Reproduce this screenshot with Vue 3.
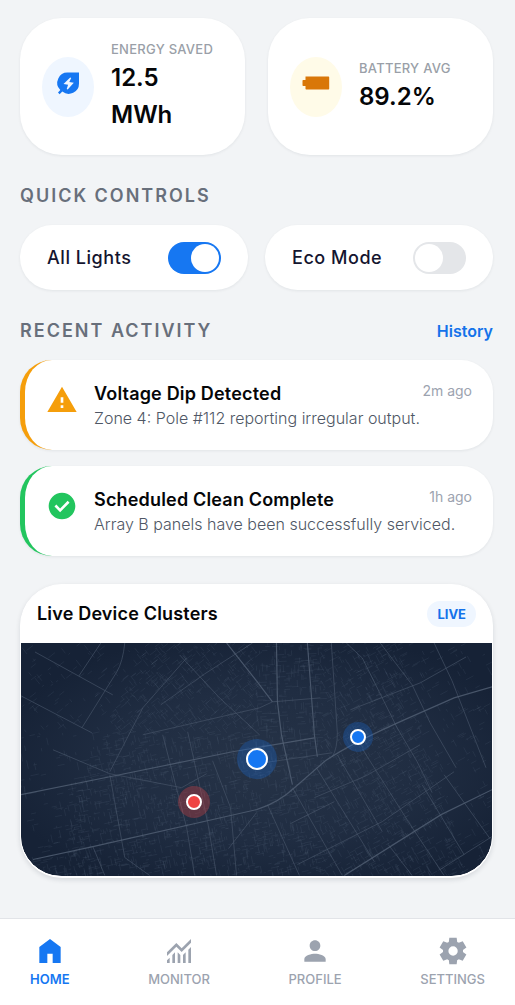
<template>
  <div class="dashboard">
    <main class="content">
      <section class="stat-grid">
        <article v-for="stat in stats" :key="stat.label" class="card stat-card">
          <span class="stat-icon" :class="stat.tone">
            <svg viewBox="0 0 28 28" aria-hidden="true">
              <path fill-rule="evenodd" :d="stat.icon" />
            </svg>
          </span>
          <div>
            <p class="stat-label">{{ stat.label }}</p>
            <p class="stat-value">{{ stat.value }}</p>
          </div>
        </article>
      </section>

      <section class="section">
        <div class="section-header">
          <h2>QUICK CONTROLS</h2>
        </div>
        <div class="control-grid">
          <label v-for="control in controls" :key="control.label" class="card control">
            <span>{{ control.label }}</span>
            <input v-model="control.on" type="checkbox" role="switch" class="switch" />
          </label>
        </div>
      </section>

      <section class="section">
        <div class="section-header">
          <h2>RECENT ACTIVITY</h2>
          <a href="#history">History</a>
        </div>
        <div class="activity-list">
          <article
            v-for="item in activities"
            :key="item.title"
            class="card activity"
            :class="item.tone"
          >
            <svg class="activity-icon" viewBox="0 0 24 24" aria-hidden="true">
              <path :d="item.icon" />
            </svg>
            <div class="activity-body">
              <div class="activity-top">
                <h3>{{ item.title }}</h3>
                <time>{{ item.time }}</time>
              </div>
              <p>{{ item.text }}</p>
            </div>
          </article>
        </div>
      </section>

      <section class="section map-card">
        <div class="map-header">
          <h3>Live Device Clusters</h3>
          <span class="badge">LIVE</span>
        </div>
        <div class="map">
          <svg viewBox="0 0 472 233" preserveAspectRatio="xMidYMid slice" aria-hidden="true">
            <defs>
              <radialGradient id="land" cx="52%" cy="52%" r="58%">
                <stop offset="0" stop-color="#263347" />
                <stop offset="0.55" stop-color="#202d42" />
                <stop offset="1" stop-color="#162236" />
              </radialGradient>
            </defs>
            <rect width="472" height="233" fill="url(#land)" />
            <path class="lanes" :d="lanes" />
            <path v-for="road in streets" :key="road" class="street" :d="road" />
            <path v-for="road in avenues" :key="road" class="avenue" :d="road" />
          </svg>
          <span
            v-for="pin in pins"
            :key="pin.id"
            class="pin"
            :class="pin.kind"
            :style="{ left: pin.x + '%', top: pin.y + '%' }"
          ></span>
        </div>
      </section>
    </main>

    <nav class="tab-bar">
      <a
        v-for="tab in tabs"
        :key="tab.label"
        :href="tab.href"
        class="tab"
        :class="{ active: tab.active }"
      >
        <svg viewBox="0 0 24 24" aria-hidden="true">
          <path :d="tab.icon" />
        </svg>
        <span>{{ tab.label }}</span>
      </a>
    </nav>
  </div>
</template>

<script setup>
import { ref } from 'vue'

const stats = [
  {
    label: 'ENERGY SAVED',
    value: '12.5 MWh',
    tone: 'blue',
    icon: 'M14.5 3.5H25V14.5A10.3 10.3 0 0 1 8.3 22.6L5.6 25.2L4 23.6L6.3 21A10.3 10.3 0 0 1 14.5 3.5ZM16.2 8.6L9.5 15.1L14.1 15.8L12.7 20.1L13.7 20.4L19.8 13.7L15.3 12.9L17.2 9.1Z'
  },
  {
    label: 'BATTERY AVG',
    value: '89.2%',
    tone: 'amber',
    icon: 'M3.5 7.5H26.5Q27.2 7.5 27.2 8.2V19.8Q27.2 20.5 26.5 20.5H4.2Q3.5 20.5 3.5 19.8V17H1.2Q.5 17 .5 16.3V11.7Q.5 11 1.2 11H3.5Z'
  }
]

const controls = ref([
  { label: 'All Lights', on: true },
  { label: 'Eco Mode', on: false }
])

const activities = [
  {
    title: 'Voltage Dip Detected',
    text: 'Zone 4: Pole #112 reporting irregular output.',
    time: '2m ago',
    tone: 'warning',
    icon: 'M1 21h22L12 2 1 21zm12-3h-2v-2h2v2zm0-4h-2v-4h2v4z'
  },
  {
    title: 'Scheduled Clean Complete',
    text: 'Array B panels have been successfully serviced.',
    time: '1h ago',
    tone: 'success',
    icon: 'M12 2C6.48 2 2 6.48 2 12s4.48 10 10 10 10-4.48 10-10S17.52 2 12 2zm-1.4 14.6-4.25-4.25 1.4-1.4 2.85 2.85 5.65-5.65 1.4 1.4z'
  }
]

const avenues = [
  'M0 152L89 134L212 109L294 95',
  'M12 217L72 204L236 167Q258 160 274 145L305 118Q330 101 384 77L434 55L472 44',
  'M206 0L236 38L252 59',
  'M287 0L294 92L297 114',
  'M256 0L257 59L261 92L272 142',
  'M324 233L421 172L472 147'
]

const streets = [
  'M14 9L92 52',
  'M104 0Q102 19 96 29L61 85',
  'M0 53L71 90',
  'M32 107L89 131L161 145L186 131',
  'M80 0L58 33',
  'M166 15L122 65L89 129',
  'M159 12L199 55L239 92',
  'M122 92L239 65L252 59L300 55',
  'M89 132L104 215L129 233M72 204L84 233',
  'M142 92L166 185L174 233',
  'M167 89L187 179L196 233',
  'M192 118L210 165L216 233',
  'M236 170L208 206',
  'M230 122L312 110',
  'M311 0L317 90Q317 106 312 114',
  'M272 145L314 219L322 233',
  'M296 125L354 219',
  'M317 112L362 189',
  'M342 106L390 182L424 233',
  'M326 0L342 15L377 85L397 119L412 150',
  'M360 0L392 42L410 80L436 125',
  'M414 0L432 38L452 89L466 125',
  'M277 222L362 179L434 129',
  'M294 155L346 133L400 102',
  'M270 181L314 159',
  'M402 142L444 212',
  'M424 132L470 196',
  'M330 67L400 40L446 14',
  'M368 202L392 233M420 227L472 194',
  'M247 162L274 222L279 233',
  'M232 0L184 31L140 62'
]

// Fine street texture: short segments aligned to the district's own grid.
function buildLanes() {
  let seed = 17
  const random = () => {
    seed = (seed * 16807) % 2147483647
    return seed / 2147483647
  }
  let d = ''
  for (let i = 0; i < 4800; i++) {
    const x = random() * 472
    const y = random() * 233
    const inCity = x + y * 0.5 > 125 && x - y * 0.3 < 375
    if (!inCity && random() < 0.78) continue
    const base = x > 300 ? -28 : x > 235 && y < 110 ? -3 : x < 235 && y < 90 ? -38 : -12
    const angle = ((base + (random() < 0.5 ? 90 : 0)) * Math.PI) / 180
    const length = 2 + random() * 7
    d += `M${x.toFixed(1)} ${y.toFixed(1)}l${(Math.cos(angle) * length).toFixed(1)} ${(Math.sin(angle) * length).toFixed(1)}`
  }
  return d
}

const lanes = buildLanes()

const pins = [
  { id: 1, kind: 'large', x: 50, y: 50 },
  { id: 2, kind: 'alert', x: 36.7, y: 68.3 },
  { id: 3, kind: 'small', x: 71.6, y: 40.4 }
]

const tabs = [
  {
    label: 'HOME',
    href: '#home',
    active: true,
    icon: 'M4 21V9l8-6 8 6v12h-6v-7h-4v7z'
  },
  {
    label: 'MONITOR',
    href: '#monitor',
    icon: 'M3 21v-2l2-2v4zm4 0v-6l2-2v8zm4 0v-8l2 2.025V21zm4 0v-5.975l2-2V21zm4 0V11l2-2v12zM3 15.825V13l7-7 4 4 7-7v2.825l-7 7-4-4z'
  },
  {
    label: 'PROFILE',
    href: '#profile',
    icon: 'M12 12c2.21 0 4-1.79 4-4s-1.79-4-4-4-4 1.79-4 4 1.79 4 4 4zm0 2c-2.67 0-8 1.34-8 4v2h16v-2c0-2.66-5.33-4-8-4z'
  },
  {
    label: 'SETTINGS',
    href: '#settings',
    icon: 'M9.25 22l-.4-3.2q-.325-.125-.612-.3t-.563-.375L4.7 19.375l-2.75-4.75 2.575-1.95Q4.5 12.5 4.5 12.338v-.675q0-.163.025-.338L1.95 9.375l2.75-4.75 2.975 1.25q.275-.2.575-.375t.6-.3l.4-3.2h5.5l.4 3.2q.325.125.613.3t.562.375l2.975-1.25 2.75 4.75-2.575 1.95q.025.175.025.338v.674q0 .163-.05.338l2.575 1.95-2.75 4.75-2.95-1.25q-.275.2-.575.375t-.6.3l-.4 3.2zm2.8-6.5q1.45 0 2.475-1.025T15.55 12t-1.025-2.475T12.05 8.5q-1.475 0-2.488 1.025T8.55 12t1.012 2.475T12.05 15.5z'
  }
]
</script>

<style>
body {
  margin: 0;
  background: #f2f4f6;
}
</style>

<style scoped>
.dashboard {
  display: flex;
  flex-direction: column;
  min-height: 100vh;
  background: #f2f4f6;
  color: #050608;
  font-family: Inter, "Liberation Sans", sans-serif;
}

h2,
h3,
p {
  margin: 0;
}

a {
  color: #1472ea;
  text-decoration: none;
}

.content {
  padding: 18px 22px 40px 20px;
}

.card {
  background: #ffffff;
  box-shadow: 0 1px 3px rgba(15, 23, 42, 0.07);
}

.stat-grid {
  display: grid;
  grid-template-columns: repeat(2, minmax(0, 1fr));
  gap: 23px;
}

.stat-card {
  display: flex;
  align-items: center;
  gap: 17px;
  padding: 22px;
  border-radius: 42px;
}

.stat-icon {
  flex: none;
  padding: 12px 12px 20px;
  border-radius: 50%;
}

.stat-icon svg {
  display: block;
  width: 28px;
  height: 28px;
  fill: currentColor;
}

.stat-icon.blue {
  background: #eff6ff;
  color: #1677f2;
}

.stat-icon.amber {
  background: #fffbe8;
  color: #d97708;
}

.stat-label {
  color: #9a9fa8;
  font-size: 13px;
  font-weight: 500;
  line-height: 19px;
  letter-spacing: 0.02em;
  white-space: nowrap;
}

.stat-value {
  font-size: 24px;
  font-weight: 600;
  line-height: 37px;
}

.section {
  margin-top: 28px;
}

.section-header {
  display: flex;
  align-items: center;
  justify-content: space-between;
  margin-bottom: 16px;
  line-height: 26px;
}

.section-header h2 {
  color: #686f7b;
  font-size: 18px;
  font-weight: 600;
  letter-spacing: 2px;
}

.section-header a {
  font-size: 16px;
  font-weight: 600;
}

.control-grid {
  display: grid;
  grid-template-columns: repeat(2, minmax(0, 1fr));
  gap: 17px;
}

.control {
  display: flex;
  align-items: center;
  justify-content: space-between;
  padding: 16px 27px;
  border-radius: 33px;
  color: #14152f;
  font-size: 18px;
  font-weight: 500;
  line-height: 33px;
  letter-spacing: 0.03em;
}

.switch {
  appearance: none;
  display: flex;
  width: 53px;
  height: 32px;
  margin: 0;
  padding: 2px;
  box-sizing: border-box;
  border-radius: 16px;
  background: #e4e6e9;
  cursor: pointer;
}

.switch::before {
  content: "";
  width: 28px;
  height: 28px;
  border-radius: 50%;
  background: #ffffff;
}

.switch:checked {
  justify-content: flex-end;
  background: #1677f2;
}

.activity-list {
  display: grid;
  gap: 16px;
}

.activity {
  display: flex;
  gap: 16px;
  padding: 22px 21px 20px;
  border-left: 5px solid;
  border-radius: 32px;
}

.activity.warning {
  border-color: #f59e0b;
}

.activity.success {
  border-color: #22c55e;
}

.activity-icon {
  flex: none;
  width: 32px;
  height: 32px;
  margin-top: 2px;
}

.warning .activity-icon {
  fill: #f59e0b;
}

.success .activity-icon {
  fill: #22c55e;
}

.activity-body {
  flex: 1;
  min-width: 0;
}

.activity-top {
  display: flex;
  justify-content: space-between;
}

h3 {
  font-size: 18px;
  font-weight: 600;
  line-height: 24px;
  letter-spacing: 0.01em;
}

.activity time {
  color: #9ca3af;
  font-size: 14px;
  line-height: 18px;
}

.activity p {
  color: #4f5765;
  font-size: 16px;
  font-weight: 300;
  line-height: 24px;
}

.map-card {
  overflow: hidden;
  border: 1px solid #ffffff;
  border-bottom-width: 2px;
  border-radius: 42px;
  background: #ffffff;
  box-shadow: 0 2px 5px rgba(15, 23, 42, 0.12);
}

.map-header {
  display: flex;
  align-items: center;
  justify-content: space-between;
  padding: 16px;
}

.badge {
  padding: 0 10px;
  border-radius: 13px;
  background: #eff6ff;
  color: #1472ea;
  font-size: 13px;
  font-weight: 700;
  line-height: 26px;
}

.map {
  position: relative;
  overflow: hidden;
  aspect-ratio: 472 / 233;
  border-radius: 0 0 40px 40px;
  background: #162236;
}

.map > svg {
  display: block;
  width: 100%;
  height: 100%;
  fill: none;
}

.lanes {
  stroke: #55647a;
  stroke-width: 0.5;
  opacity: 0.38;
}

.street {
  stroke: #4b596d;
  stroke-width: 0.8;
  opacity: 0.75;
}

.avenue {
  stroke: #536074;
  stroke-width: 1.2;
  opacity: 0.8;
}

.pin {
  position: absolute;
  box-sizing: border-box;
  width: 16px;
  height: 16px;
  border: 2px solid #ffffff;
  border-radius: 50%;
  background: #1677f2;
  box-shadow: 0 0 0 7px rgba(22, 119, 242, 0.25);
  transform: translate(-50%, -50%);
}

.pin.large {
  width: 22px;
  height: 22px;
  box-shadow: 0 0 0 9px rgba(22, 119, 242, 0.25);
}

.pin.alert {
  background: #ef4444;
  box-shadow: 0 0 0 8px rgba(239, 68, 68, 0.3);
}

.tab-bar {
  position: sticky;
  bottom: 0;
  display: flex;
  justify-content: space-between;
  margin-top: auto;
  padding: 16px 30px;
  border-top: 1px solid #e2e4e8;
  background: #ffffff;
}

.tab {
  display: flex;
  flex-direction: column;
  align-items: center;
  gap: 2px;
  color: #9ca3af;
  font-size: 13px;
  font-weight: 500;
  line-height: 20px;
}

.tab svg {
  width: 32px;
  height: 32px;
  fill: currentColor;
}

.tab.active {
  color: #1677f2;
  font-weight: 600;
}
</style>
